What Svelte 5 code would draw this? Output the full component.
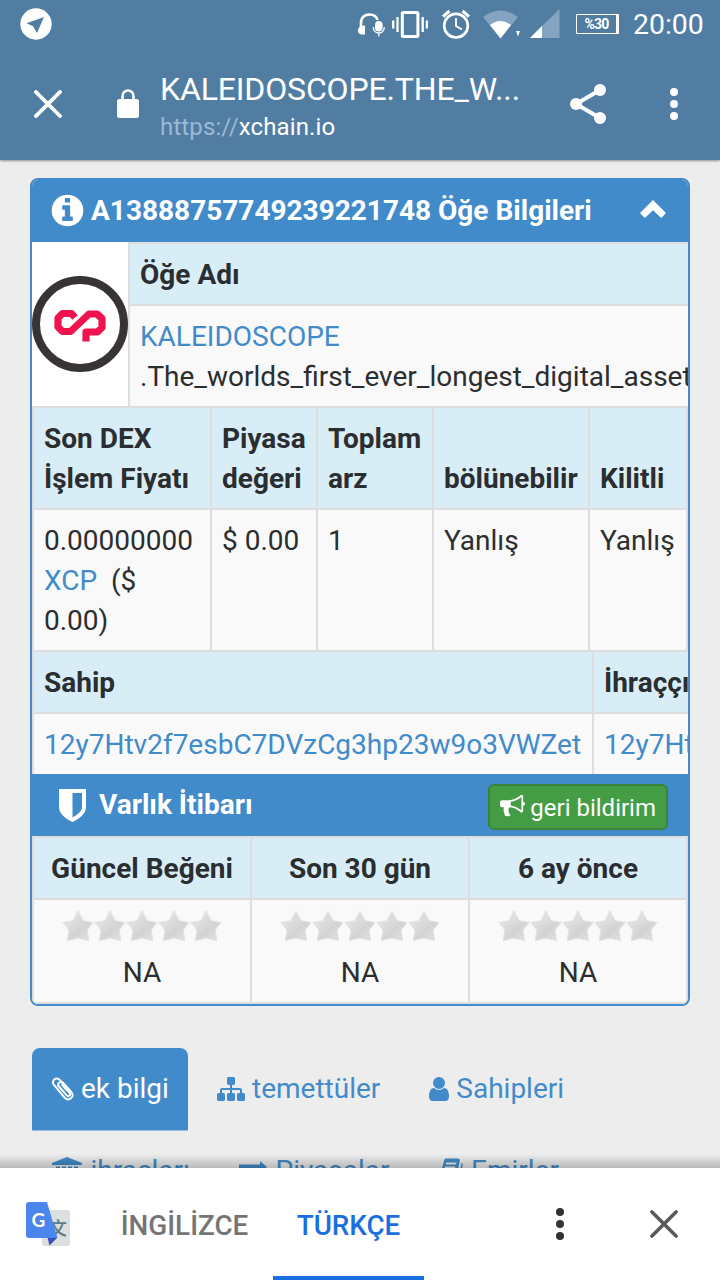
<script lang="ts">
	const market = [
		{ head: 'Son DEX İşlem Fiyatı', kind: 'price', value: '0.00000000' },
		{ head: 'Piyasa değeri', kind: 'text', value: '$ 0.00' },
		{ head: 'Toplam arz', kind: 'text', value: '1' },
		{ head: 'bölünebilir', kind: 'text', value: 'Yanlış' },
		{ head: 'Kilitli', kind: 'text', value: 'Yanlış' }
	];

	const address = '12y7Htv2f7esbC7DVzCg3hp23w9o3VWZet';
	const ratings = ['Güncel Beğeni', 'Son 30 gün', '6 ay önce'];
	const stars = [0, 1, 2, 3, 4];
</script>

<div class="screen">
	<header>
		<div class="status">
			<svg class="plane" width="32" height="32" viewBox="0 0 32 32">
				<circle cx="16" cy="16" r="15.700" fill="#fff" />
				<path d="M24 9L6.500 15.200 13 18.300 17 25z" fill="#517da2" />
			</svg>
			<svg width="28" height="28" viewBox="0 0 28 28">
				<path d="M3 19.500V13C3 7 7 4.500 11.500 4.500c4 0 7 2 8 5.500" fill="none" stroke="#fff" stroke-width="2.600" />
				<path d="M7 15.500v9H3.500Q0 24 0 20.500t3.500-4.500z" fill="#fff" />
				<rect x="17" y="11" width="7.600" height="10.500" rx="3.800" fill="#fff" />
				<path d="M15.300 17c0 8 11 8 11 0M20.800 23v3.500" fill="none" stroke="#fff" stroke-width="1.300" />
			</svg>
			<svg class="vibrate" width="36" height="28" viewBox="0 0 36 28">
				<rect x="10.300" y="2.500" width="15.600" height="24" rx="1" fill="none" stroke="#fff" stroke-width="3" />
				<path d="M5.500 7v15M30.700 7v15M1.200 10.500v8M34.900 10.500v8" stroke="#fff" stroke-width="2.300" />
			</svg>
			<svg class="alarm" width="28" height="30" viewBox="0 0 28 30">
				<circle cx="14" cy="16.700" r="11.800" fill="none" stroke="#fff" stroke-width="2.700" />
				<path d="M14 9v8l6 3.500" fill="none" stroke="#fff" stroke-width="1.900" />
				<path d="M1 7.500L7.500 2M27 7.500L20.500 2" stroke="#fff" stroke-width="3" />
			</svg>
			<svg class="wifi" width="36" height="30" viewBox="0 0 36 30">
				<path d="M0 8Q17.500-5 35 8L17.500 29.500z" fill="#85a4c1" />
				<path d="M7 16q10.500-8 21 0L17.500 29.500z" fill="#fff" />
			</svg>
			<svg class="tick" width="4" height="6" viewBox="0 0 4 6"><path d="M0 0h4L2 5.500z" fill="#fff" /></svg>
			<svg class="signal" width="30" height="30" viewBox="0 0 30 30">
				<path d="M0 29L29.500 0v29z" fill="#85a4c1" />
				<path d="M0 29L12 17v12z" fill="#fff" />
			</svg>
			<span class="battery">%30</span>
			<span class="clock">20:00</span>
		</div>
		<div class="toolbar">
			<svg class="close" width="28" height="28" viewBox="0 0 28 28">
				<path d="M2 2l24 24M26 2L2 26" stroke="#fff" stroke-width="3.800" stroke-linecap="square" />
			</svg>
			<svg class="lock" width="22" height="30" viewBox="0 0 22 30">
				<path d="M5.500 12V7a5.500 5.500 0 0 1 11 0v5" fill="none" stroke="#fff" stroke-width="2.600" />
				<rect y="10" width="22" height="19" rx="2.500" fill="#fff" />
			</svg>
			<div class="address">
				<div class="title">KALEIDOSCOPE.THE_W...</div>
				<div class="url"><span>https://</span>xchain.io</div>
			</div>
			<svg class="share" width="36" height="42" viewBox="0 0 36 42">
				<path d="M30 7L6 21l24 14" fill="none" stroke="#fff" stroke-width="4" />
				<circle cx="30" cy="7" r="6" fill="#fff" />
				<circle cx="6" cy="21" r="6" fill="#fff" />
				<circle cx="30" cy="35" r="6" fill="#fff" />
			</svg>
			<svg class="more" width="8" height="32" viewBox="0 0 8 32">
				<circle cx="4" cy="4" r="4" fill="#fff" />
				<circle cx="4" cy="16" r="4" fill="#fff" />
				<circle cx="4" cy="28" r="4" fill="#fff" />
			</svg>
		</div>
	</header>

	<main>
		<section class="panel">
			<div class="heading">
				<svg class="info" width="37" height="37" viewBox="0 0 1792 1792">
					<path fill="#fff" d="M1152 1376v-160q0-14-9-23t-23-9h-96v-512q0-14-9-23t-23-9h-320q-14 0-23 9t-9 23v160q0 14 9 23t23 9h96v320h-96q-14 0-23 9t-9 23v160q0 14 9 23t23 9h448q14 0 23-9t9-23zm-128-896v-160q0-14-9-23t-23-9h-192q-14 0-23 9t-9 23v160q0 14 9 23t23 9h192q14 0 23-9t9-23zm640 416q0 209-103 385.500t-279.500 279.500-385.500 103-385.500-103-279.500-279.500-103-385.500 103-385.500 279.500-279.500 385.500-103 385.500 103 279.500 279.500 103 385.500z" />
				</svg>
				<span>A13888757749239221748 Öğe Bilgileri</span>
				<svg class="chevron" width="26" height="18" viewBox="0 0 26 18">
					<path d="M13 0L26 13l-4.800 5L13 10.200 4.800 18 0 13z" fill="#fff" />
				</svg>
			</div>

			<div class="asset">
				<div class="logo">
					<svg width="96" height="96" viewBox="0 0 96 96">
						<circle cx="48" cy="48" r="44" fill="#fff" stroke="#383435" stroke-width="8" />
						<path d="M43 41.500L39.500 37.500h-9l-4.500 4.500v9l4.500 4.500h8L57 38h8l5 4.500v9L65.500 56H54v9.500" fill="none" stroke="#f0134d" stroke-width="7.200" stroke-linejoin="round" />
					</svg>
				</div>
				<div class="name">
					<div class="th">Öğe Adı</div>
					<div class="td"><a href="#asset">KALEIDOSCOPE</a><br />.The_worlds_first_ever_longest_digital_asset</div>
				</div>
			</div>

			<div class="grid market">
				{#each market as col}
					<div class="th">{col.head}</div>
				{/each}
				{#each market as col}
					<div class="td">
						{#if col.kind === 'price'}
							{col.value} <a href="#xcp">XCP</a>&nbsp; ($ 0.00)
						{:else}
							{col.value}
						{/if}
					</div>
				{/each}
			</div>

			<div class="grid owners">
				<div class="th">Sahip</div>
				<div class="th">İhraççı</div>
				<div class="td"><a href="#owner">{address}</a></div>
				<div class="td"><a href="#issuer">{address}</a></div>
			</div>

			<div class="heading reputation">
				<svg class="shield" width="27" height="33" viewBox="0 0 27 33">
					<path fill="#fff" fill-rule="evenodd" d="M0 0h27v18c0 7-7 12-13.500 15C7 30 0 25 0 18zM13.500 4v24.500C18 26 23 22.500 23 18V4z" />
				</svg>
				<span>Varlık İtibarı</span>
				<button>
					<svg width="25" height="25" viewBox="0 0 1792 1792">
						<path fill="#fff" d="M1664 640q53 0 90.500 37.500t37.500 90.500-37.500 90.500-90.500 37.500v384q0 52-38 90t-90 38q-417-347-812-380-58 19-91 66t-31 100.500 40 92.500q-20 33-23 65.500t6 58 33.500 55 48 50 61.500 50.500q-29 58-111.500 83t-168.500 11.500-132-55.500q-7-23-29.500-87.500t-32-94.500-23-89-15-101 3.500-98.500 22-110.500h-122q-66 0-113-47t-47-113v-192q0-66 47-113t113-47h480q435 0 896-384 52 0 90 38t38 90v384zm-128 604v-954q-394 302-768 343v270q377 42 768 341z" />
					</svg>
					<span>geri bildirim</span>
				</button>
			</div>

			<div class="grid ratings">
				{#each ratings as rating}
					<div class="th">{rating}</div>
				{/each}
				{#each ratings as rating}
					<div class="td">
						<div class="stars">
							{#each stars as star}
								<svg width="32" height="32" viewBox="0 0 32 32">
									<defs>
										<linearGradient id="silver" x1="0" y1="0" x2="1" y2="1">
											<stop offset="0.200" stop-color="#e4e4e4" />
											<stop offset="0.600" stop-color="#d3d3d3" />
											<stop offset="0.900" stop-color="#dedede" />
										</linearGradient>
									</defs>
									<path d="M16 1l5 9.800L31 12.500l-6 7.500 1.500 10.500L16 28 5.500 30.500 7 20 1 12.500l10-1.700z" fill="url(#silver)" stroke="#e0e0e0" stroke-width="1" />
								</svg>
							{/each}
						</div>
						NA
					</div>
				{/each}
			</div>
		</section>

		<nav>
			<div class="tabs">
				<a class="tab active" href="#info">
					<svg width="22" height="25" viewBox="0 0 22 25">
						<path d="M6 9.500l8.500 9.700c2.300 2.300 4.800-.3 2.900-2.600L8 4.200C4.500.200-1.200 4.500 1.800 8.600L12.500 21.500c4.300 4.500 10.500-.5 7-5.300L11 6.600C8.500 4.400 5 7.200 6.800 10" fill="none" stroke="#fff" stroke-width="1.900" stroke-linecap="round" />
						<path d="M9.500 8.500l6 6.800" stroke="#fff" stroke-width="1.600" />
					</svg>
					<span>ek bilgi</span>
				</a>
				<a class="tab" href="#dividends">
					<svg width="28" height="28" viewBox="0 0 1792 1792">
						<path fill="#428bca" d="M1792 1248v320q0 40-28 68t-68 28h-320q-40 0-68-28t-28-68v-320q0-40 28-68t68-28h96v-192h-512v192h96q40 0 68 28t28 68v320q0 40-28 68t-68 28h-320q-40 0-68-28t-28-68v-320q0-40 28-68t68-28h96v-192h-512v192h96q40 0 68 28t28 68v320q0 40-28 68t-68 28h-320q-40 0-68-28t-28-68v-320q0-40 28-68t68-28h96v-192q0-52 38-90t90-38h512v-192h-96q-40 0-68-28t-28-68v-320q0-40 28-68t68-28h320q40 0 68 28t28 68v320q0 40-28 68t-68 28h-96v192h512q52 0 90 38t38 90v192h96q40 0 68 28t28 68z" />
					</svg>
					<span>temettüler</span>
				</a>
				<a class="tab" href="#holders">
					<svg width="20" height="28" viewBox="256 0 1280 1792">
						<path fill="#428bca" d="M1536 1399q0 109-62.500 187t-150.500 78h-854q-88 0-150.500-78t-62.500-187q0-85 8.500-160.500t31.500-152 58.500-131 94-89 134.500-34.500q131 128 313 128t313-128q76 0 134.500 34.500t94 89 58.500 131 31.500 152 8.500 160.500zm-256-887q0 159-112.500 271.500t-271.500 112.500-271.500-112.500-112.500-271.500 112.500-271.500 271.500-112.500 271.500 112.500 112.500 271.500z" />
					</svg>
					<span>Sahipleri</span>
				</a>
			</div>
			<div class="tabs second">
				<a class="tab" href="#issuances">
					<svg width="30" height="28" viewBox="0 0 30 28">
						<path fill="#428bca" d="M15 0l15 6v2H0V6zM4 9.500h4v10h2v-10h4v10h2v-10h4v10h2v-10h4v10h2v3H2v-3h2zM0 24h30v3H0z" />
					</svg>
					<span>ihraçları</span>
				</a>
				<a class="tab" href="#markets">
					<svg width="28" height="28" viewBox="0 0 28 28">
						<path fill="#428bca" d="M0 7.500h21V4l7 6-7 6v-3.500H0zM28 18H7v-4l-7 6 7 6v-3.500h21z" />
					</svg>
					<span>Piyasalar</span>
				</a>
				<a class="tab" href="#orders">
					<svg width="24" height="28" viewBox="0 0 24 28">
						<path fill="#428bca" fill-rule="evenodd" d="M7 1.500h11.500c2 0 2.800 1.500 2.200 3.200L16 23.500C15.500 25 14 26 12.500 26H3c-2 0-3.500-2-2.800-4L5 4c.300-1.200 1-2.500 2-2.500zM7.200 5.500l-.6 2H17l.6-2zM6 9.500l-.6 2H16l.5-2z" />
						<path fill="none" stroke="#428bca" stroke-width="1.500" d="M22.500 6.500c.8.8.6 1.500.4 2.500L18 24" />
					</svg>
					<span>Emirler</span>
				</a>
			</div>
		</nav>
		<div class="shade"></div>
	</main>

	<footer>
		<svg class="translate" width="46" height="46" viewBox="0 0 46 46">
			<rect x="16" y="9" width="28" height="36" rx="2.500" fill="#dcdfe0" />
			<text x="23" y="34" font-size="18" fill="#5f7984" font-family="Noto Sans CJK SC, sans-serif">文</text>
			<path d="M21.500 36.500H31.500l-8 8z" fill="#3a4fb5" />
			<path d="M3 1h18l10.500 36H3q-3 0-3-3V4q0-3 3-3z" fill="#4a86ee" />
			<text x="5.500" y="25.500" font-size="19" font-weight="700" fill="#fff" font-family="Lato, sans-serif">G</text>
		</svg>
		<span class="lang english">İNGİLİZCE</span>
		<span class="lang turkish">TÜRKÇE</span>
		<svg class="options" width="8" height="32" viewBox="0 0 8 32">
			<circle cx="4" cy="4" r="4" fill="#333" />
			<circle cx="4" cy="16" r="4" fill="#333" />
			<circle cx="4" cy="28" r="4" fill="#333" />
		</svg>
		<svg class="dismiss" width="28" height="28" viewBox="0 0 28 28">
			<path d="M2 2l24 24M26 2L2 26" stroke="#5a5a5a" stroke-width="3.500" stroke-linecap="square" />
		</svg>
	</footer>
</div>

<style>
	:global(body) {
		margin: 0;
	}
	.screen {
		width: 720px;
		height: 1280px;
		display: flex;
		flex-direction: column;
		overflow: hidden;
		background: #ededed;
		font-family: Roboto, sans-serif;
		font-size: 28px;
		line-height: 40px;
		color: #2b2e30;
	}
	svg {
		display: block;
		flex: none;
	}
	a {
		color: #428bca;
		text-decoration: none;
	}

	header {
		height: 160px;
		flex: none;
		background: #517da2;
		color: #fff;
		box-shadow: 0 1px 2px rgba(0, 0, 0, 0.4);
		z-index: 1;
	}
	.status {
		height: 48px;
		display: flex;
		align-items: center;
	}
	.plane {
		margin: 0 306px 0 20px;
	}
	.vibrate {
		margin-left: 6px;
	}
	.alarm {
		margin-left: 14px;
	}
	.wifi {
		margin-left: 13px;
	}
	.tick {
		margin: 20px 0 0 -3px;
	}
	.signal {
		margin-left: 10px;
	}
	.battery {
		box-sizing: border-box;
		width: 43px;
		height: 20px;
		margin-left: 16px;
		border: 1.5px solid #fff;
		border-right-width: 3px;
		border-radius: 1px;
		font-size: 14px;
		font-weight: 700;
		letter-spacing: -0.8px;
		line-height: 19px;
		text-align: center;
	}
	.clock {
		margin-left: 14px;
		padding-top: 2px;
		font-size: 28.4px;
	}
	.toolbar {
		height: 112px;
		display: flex;
		align-items: center;
	}
	.close {
		margin-left: 34px;
	}
	.lock {
		margin-left: 55px;
	}
	.address {
		width: 362px;
		margin: 0 48px 0 21px;
		padding-top: 5px;
		white-space: nowrap;
	}
	.title {
		font-size: 32px;
		letter-spacing: -0.15px;
	}
	.url {
		font-size: 24px;
		letter-spacing: 0.12px;
		line-height: 36px;
	}
	.url span {
		color: #9bb9d6;
	}
	.more {
		margin-left: 64px;
	}

	main {
		position: relative;
		height: 1008px;
		flex: none;
		overflow: hidden;
	}
	.panel {
		box-sizing: border-box;
		width: 660px;
		height: 828px;
		margin: 18px 0 0 30px;
		border: 2px solid #428bca;
		border-radius: 8px;
		overflow: hidden;
		background: #f9f9f9;
	}
	.heading {
		height: 62px;
		display: flex;
		align-items: center;
		background: #428bca;
		color: #fff;
		font-weight: 700;
		white-space: nowrap;
	}
	.info {
		margin: 0 5px 1px 17px;
	}
	.chevron {
		margin: 0 22px 4px auto;
	}
	.th,
	.td {
		box-sizing: border-box;
		padding: 11px 10px 9px;
		border-left: 2px solid #ddd;
		border-bottom: 2px solid #ddd;
		background: #f9f9f9;
	}
	.th {
		background: #d9edf7;
		font-weight: 700;
	}
	.asset {
		display: flex;
	}
	.logo {
		width: 96px;
		height: 164px;
		display: flex;
		align-items: center;
		background: #fff;
		border-bottom: 2px solid #ddd;
	}
	.name {
		flex: 1;
		min-width: 0;
		border-top: 2px solid #ddd;
	}
	.name .td {
		height: 102px;
		white-space: nowrap;
		overflow: hidden;
	}
	.grid {
		display: grid;
		overflow: hidden;
	}
	.market {
		grid-template-columns: 178px 106px 116px 156px 98px;
		grid-template-rows: 102px 142px;
		border-right: 2px solid #ddd;
	}
	.market .th {
		display: flex;
		align-items: flex-end;
	}
	.owners {
		grid-template-columns: 560px 560px;
		grid-template-rows: 62px 60px;
	}
	.owners .td {
		border-bottom: none;
	}
	.reputation {
		height: 62px;
	}
	.shield {
		margin: 0 13px 0 27px;
	}
	button {
		box-sizing: border-box;
		height: 46px;
		display: flex;
		align-items: center;
		gap: 5px;
		margin: 4px 20px 0 auto;
		padding: 0 10px;
		border: 2px solid #398439;
		border-radius: 6px;
		background: #449d44;
		color: #fff;
		font: 400 24px/36px Roboto, sans-serif;
		white-space: nowrap;
	}
	button svg {
		margin-bottom: 3px;
	}
	button span {
		padding-top: 2px;
	}
	.ratings {
		grid-template-columns: 218px 218px 218px;
		grid-template-rows: 62px 104px;
		border-top: 2px solid #ddd;
		border-right: 2px solid #ddd;
		text-align: center;
	}
	.stars {
		height: 42px;
		display: flex;
		justify-content: center;
	}
	.stars svg {
		margin-top: -1px;
	}

	nav {
		margin: 42px 0 0 32px;
	}
	.tabs {
		height: 82px;
		display: flex;
	}
	.tab {
		box-sizing: border-box;
		height: 82px;
		display: flex;
		align-items: center;
		gap: 7px;
		padding: 0 20px;
		white-space: nowrap;
	}
	.tab svg {
		margin-bottom: 1px;
	}
	.tab + .tab {
		margin-left: 9px;
	}
	.second .tab {
		gap: 8.5px;
	}
	.active {
		width: 156px;
		background: #428bca;
		color: #fff;
		border-radius: 8px 8px 0 0;
		box-shadow: 0 1px 0 -0.5px #428bca;
	}
	.shade {
		position: absolute;
		left: 0;
		right: 0;
		bottom: 0;
		height: 14px;
		background: linear-gradient(rgba(0, 0, 0, 0), rgba(0, 0, 0, 0.22));
	}

	footer {
		height: 112px;
		flex: none;
		display: flex;
		align-items: center;
		background: #fff;
		font-weight: 500;
		font-size: 27.8px;
	}
	.translate {
		margin-left: 26px;
	}
	.lang {
		box-sizing: border-box;
		height: 112px;
		line-height: 115px;
		text-align: center;
		white-space: nowrap;
	}
	.english {
		width: 177px;
		margin-left: 24px;
		color: #757575;
	}
	.turkish {
		width: 151px;
		border-bottom: 4px solid #1a6fe0;
		color: #1a6fe0;
	}
	.options {
		margin-left: 132px;
	}
	.dismiss {
		margin-left: 86px;
	}
</style>
